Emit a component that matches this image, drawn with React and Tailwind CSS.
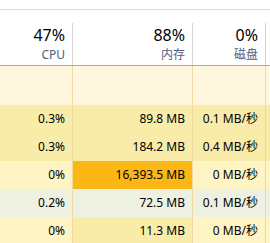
import React from 'react';

const LIGHT = 'bg-[#fff4c4]';
const MID = 'bg-[#f9eca8]';
const HOT = 'bg-[#fcb616]';
const HOVER = 'bg-[#eef0e0]';

const rows = [
  { cpu: ['0.3%', MID], mem: ['89.8 MB', MID], disk: ['0.1 MB/秒', MID] },
  { cpu: ['0.3%', MID], mem: ['184.2 MB', MID], disk: ['0.4 MB/秒', MID] },
  { cpu: ['0%', LIGHT], mem: ['16,393.5 MB', HOT], disk: ['0 MB/秒', LIGHT] },
  { cpu: ['0.2%', HOVER], mem: ['72.5 MB', HOVER], disk: ['0.1 MB/秒', HOVER] },
  { cpu: ['0%', LIGHT], mem: ['11.3 MB', MID], disk: ['0 MB/秒', LIGHT] },
];

const font = { fontFamily: '"Noto Sans", "Noto Sans CJK SC", sans-serif' };

const Cell = ({ value, bg, w }) => (
  <div className={`${w} ${bg} h-[28px] shrink-0 border-r border-[#f0d9a0] flex items-center justify-end pr-[7px] text-[12px] text-black`}>
    {value}
  </div>
);

const HeadCell = ({ value, label, w }) => (
  <div className={`${w} h-[42px] shrink-0 border-r border-[#d4d4d4] flex flex-col items-end pr-[7px]`}>
    <div className="text-[16px] leading-[22px] mt-[1px] text-black">{value}</div>
    <div className="text-[12px] leading-[16px] mt-[1px] text-[#4d6080]">{label}</div>
  </div>
);

export default function App() {
  return (
    <div className="w-[270px] h-[243px] overflow-hidden bg-white" style={font}>
      <div className="h-[9px]" />
      <div className="h-px bg-[#dcdcdc]" />
      <div className="h-[56px] pt-[13px] flex border-b border-[#a8a8a8]">
        <HeadCell w="w-[73px]" value="47%" label="CPU" />
        <HeadCell w="w-[120px]" value="88%" label="内存" />
        <HeadCell w="w-[73px]" value="0%" label="磁盘" />
      </div>
      <div className="flex h-[39px] bg-[#fff6de]">
        <div className="w-[73px] shrink-0 border-r border-[#f0d9a0]" />
        <div className="w-[120px] shrink-0 border-r border-[#f0d9a0]" />
        <div className="w-[73px] shrink-0 border-r border-[#f0d9a0]" />
      </div>
      {rows.map((r, i) => (
        <div key={i} className="flex">
          <Cell w="w-[73px]" value={r.cpu[0]} bg={r.cpu[1]} />
          <Cell w="w-[120px]" value={r.mem[0]} bg={r.mem[1]} />
          <Cell w="w-[73px]" value={r.disk[0]} bg={r.disk[1]} />
          <div className={`w-[4px] h-[28px] ${r.disk[1]}`} />
        </div>
      ))}
    </div>
  );
}
